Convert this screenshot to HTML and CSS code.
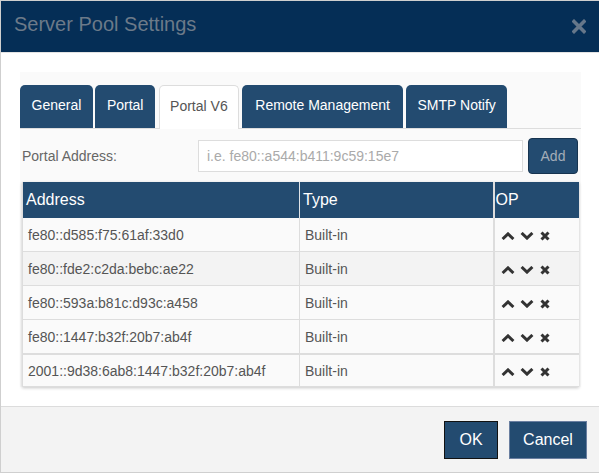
FILE: index.html
```html
<!DOCTYPE html>
<html>
<head>
<meta charset="utf-8">
<link rel="stylesheet" href="styles.css">
</head>
<body>
<div class="dialog">
  <div class="dlg-header">
    <span class="dlg-title">Server Pool Settings</span>
    <svg class="dlg-close" width="14" height="15" viewBox="0 0 14 15"><path d="M2 2.5 L12 12.5 M12 2.5 L2 12.5" stroke="#66778a" stroke-width="3.6" stroke-linecap="square" fill="none"/></svg>
  </div>
  <div class="dlg-body">
    <div class="panel">
      <div class="tabs">
        <div class="tab">General</div>
        <div class="tab">Portal</div>
        <div class="tab active">Portal V6</div>
        <div class="tab wide">Remote Management</div>
        <div class="tab">SMTP Notify</div>
      </div>
      <div class="tab-content">
        <div class="addr-row">
          <label class="addr-label">Portal Address:</label>
          <input class="addr-input" type="text" placeholder="i.e. fe80::a544:b411:9c59:15e7">
          <button class="btn-add">Add</button>
        </div>
        <table class="addr-table">
          <colgroup><col class="c-addr"><col class="c-type"><col class="c-op"></colgroup>
          <thead>
            <tr><th>Address</th><th>Type</th><th class="op">OP</th></tr>
          </thead>
          <tbody>
            <tr><td>fe80::d585:f75:61af:33d0</td><td>Built-in</td><td class="op"><span class="ops"><svg width="14" height="8" viewBox="0 0 14 8"><path d="M1.6 7 L7 1.9 L12.4 7" stroke="#333" stroke-width="3" fill="none"/></svg><svg width="14" height="8" viewBox="0 0 14 8"><path d="M1.6 1 L7 6.1 L12.4 1" stroke="#333" stroke-width="3" fill="none"/></svg><svg width="10" height="10" viewBox="0 0 10 10"><path d="M1.5 1.5 L8.5 8.5 M8.5 1.5 L1.5 8.5" stroke="#333" stroke-width="3" fill="none"/></svg></span></td></tr>
            <tr class="hl"><td>fe80::fde2:c2da:bebc:ae22</td><td>Built-in</td><td class="op"><span class="ops"><svg width="14" height="8" viewBox="0 0 14 8"><path d="M1.6 7 L7 1.9 L12.4 7" stroke="#333" stroke-width="3" fill="none"/></svg><svg width="14" height="8" viewBox="0 0 14 8"><path d="M1.6 1 L7 6.1 L12.4 1" stroke="#333" stroke-width="3" fill="none"/></svg><svg width="10" height="10" viewBox="0 0 10 10"><path d="M1.5 1.5 L8.5 8.5 M8.5 1.5 L1.5 8.5" stroke="#333" stroke-width="3" fill="none"/></svg></span></td></tr>
            <tr><td>fe80::593a:b81c:d93c:a458</td><td>Built-in</td><td class="op"><span class="ops"><svg width="14" height="8" viewBox="0 0 14 8"><path d="M1.6 7 L7 1.9 L12.4 7" stroke="#333" stroke-width="3" fill="none"/></svg><svg width="14" height="8" viewBox="0 0 14 8"><path d="M1.6 1 L7 6.1 L12.4 1" stroke="#333" stroke-width="3" fill="none"/></svg><svg width="10" height="10" viewBox="0 0 10 10"><path d="M1.5 1.5 L8.5 8.5 M8.5 1.5 L1.5 8.5" stroke="#333" stroke-width="3" fill="none"/></svg></span></td></tr>
            <tr><td>fe80::1447:b32f:20b7:ab4f</td><td>Built-in</td><td class="op"><span class="ops"><svg width="14" height="8" viewBox="0 0 14 8"><path d="M1.6 7 L7 1.9 L12.4 7" stroke="#333" stroke-width="3" fill="none"/></svg><svg width="14" height="8" viewBox="0 0 14 8"><path d="M1.6 1 L7 6.1 L12.4 1" stroke="#333" stroke-width="3" fill="none"/></svg><svg width="10" height="10" viewBox="0 0 10 10"><path d="M1.5 1.5 L8.5 8.5 M8.5 1.5 L1.5 8.5" stroke="#333" stroke-width="3" fill="none"/></svg></span></td></tr>
            <tr class="last"><td>2001::9d38:6ab8:1447:b32f:20b7:ab4f</td><td>Built-in</td><td class="op"><span class="ops"><svg width="14" height="8" viewBox="0 0 14 8"><path d="M1.6 7 L7 1.9 L12.4 7" stroke="#333" stroke-width="3" fill="none"/></svg><svg width="14" height="8" viewBox="0 0 14 8"><path d="M1.6 1 L7 6.1 L12.4 1" stroke="#333" stroke-width="3" fill="none"/></svg><svg width="10" height="10" viewBox="0 0 10 10"><path d="M1.5 1.5 L8.5 8.5 M8.5 1.5 L1.5 8.5" stroke="#333" stroke-width="3" fill="none"/></svg></span></td></tr>
          </tbody>
        </table>
      </div>
    </div>
  </div>
  <div class="dlg-footer">
    <button class="btn btn-ok">OK</button>
    <button class="btn btn-cancel">Cancel</button>
  </div>
</div>
</body>
</html>
```

FILE: styles.css
```css
html, body {
  margin: 0;
  padding: 0;
  background: #fff;
  overflow: hidden;
}
body {
  font-family: "Liberation Sans", Arial, sans-serif;
}
.dialog {
  width: 599px;
  height: 473px;
  box-sizing: border-box;
  border: 1px solid #cfcfcf;
  border-right: 0;
  display: flex;
  flex-direction: column;
}
.dlg-header {
  height: 52px;
  box-sizing: border-box;
  background: #052e56;
  border-bottom: 1px solid #e3e3e3;
  display: flex;
  align-items: center;
  justify-content: space-between;
  padding: 0 13px 4px 13px;
  flex: none;
}
.dlg-title {
  font-size: 20px;
  color: #6c7a89;
}
.dlg-close {
  display: block;
  margin-top: 4px;
}
.dlg-body {
  flex: 1;
  padding: 19px 18px 0 19px;
}
.panel {
  background: #fafafa;
  padding-top: 13px;
}
.tabs {
  display: flex;
  border-bottom: 1px solid #ddd;
  height: 43px;
}
.tab {
  height: 43px;
  box-sizing: border-box;
  line-height: 41px;
  padding: 0 11.5px;
  margin-right: 2.6px;
  background: #234b70;
  color: #fff;
  font-size: 14px;
  border-radius: 5px 5px 0 0;
  white-space: nowrap;
}
.tab.wide {
  padding: 0 13.5px;
}
.tab.active {
  background: #fff;
  color: #555;
  border: 1px solid #ddd;
  border-bottom: 0;
  height: 44px;
  line-height: 40px;
  padding: 0 10.5px;
  margin-left: 1px;
}
.tab-content {
  padding: 9px 3px 0 2px;
}
.addr-row {
  display: flex;
  align-items: center;
  height: 36px;
}
.addr-label {
  width: 176px;
  font-size: 14px;
  color: #666;
  flex: none;
}
.addr-input {
  width: 325px;
  height: 32px;
  box-sizing: border-box;
  border: 1px solid #ddd;
  padding: 0 8px;
  margin: 0 5px 0 0;
  font-family: inherit;
  font-size: 14px;
  color: #555;
  background: #fff;
  outline: none;
  flex: none;
}
.addr-input::placeholder {
  color: #aaa;
}
.btn-add {
  width: 50px;
  height: 36px;
  background: #234b70;
  border: 1px solid #173450;
  border-radius: 4px;
  color: #a3adb8;
  font-family: inherit;
  font-size: 14px;
  padding: 0;
  flex: none;
}
.addr-table {
  margin-top: 8px;
  width: 556px;
  table-layout: fixed;
  border-collapse: collapse;
  border-left: 1px solid #ddd;
  box-shadow: 0 1px 3px rgba(0, 0, 0, 0.22);
}
.c-addr { width: 277px; }
.c-type { width: 194px; }
.c-op { width: 85px; }
.addr-table th {
  height: 36px;
  padding: 0 3px;
  background: #234b70;
  color: #fff;
  font-size: 16px;
  font-weight: normal;
  text-align: left;
  border-right: 1px solid #dfe3e7;
}
.addr-table th.op {
  border-left: 2px solid #ddd;
  border-right: 0;
  padding-left: 1px;
}
.addr-table td {
  height: 33px;
  padding: 0 5px;
  font-size: 14px;
  color: #555;
  background: #fafafa;
  border-bottom: 1px solid #ddd;
  border-right: 1px solid #ddd;
  white-space: nowrap;
}
.addr-table td.op {
  border-left: 2px solid #ddd;
  border-right: 0;
}
.addr-table tr.hl td {
  background: #f3f3f3;
}
.addr-table tr.last td {
  border-top: 2px solid #ddd;
  height: 31px;
}
.ops {
  display: inline-flex;
  align-items: center;
  gap: 5px;
  vertical-align: middle;
  margin-left: 1px;
}
.ops svg {
  display: block;
}
.ops svg:last-child {
  margin-left: 1px;
}
.dlg-footer {
  height: 65px;
  flex: none;
  border-top: 1px solid #dcdcdc;
  background: #f3f3f3;
  display: flex;
  justify-content: flex-end;
  align-items: center;
  gap: 11px;
  padding-right: 12px;
}
.btn {
  height: 38px;
  box-sizing: border-box;
  background: #234b70;
  color: #fff;
  font-family: inherit;
  font-size: 16px;
  border-radius: 0;
  padding: 0 13px;
}
.btn-ok {
  min-width: 54px;
  border: 1px solid #111;
}
.btn-cancel {
  min-width: 78px;
  border: 1px solid #6a7fa0;
}
```
